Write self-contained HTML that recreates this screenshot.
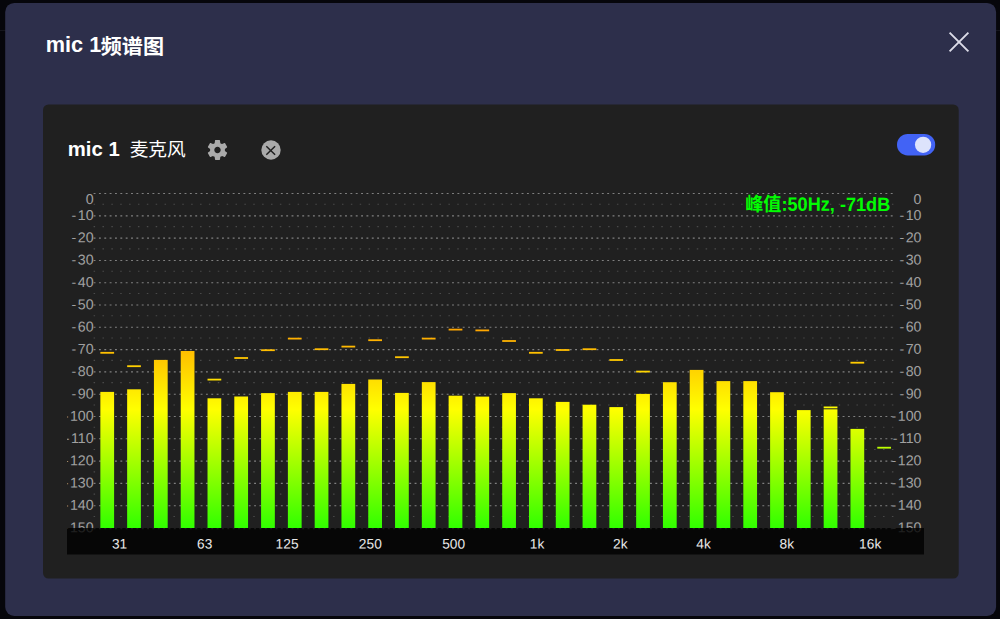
<!DOCTYPE html>
<html lang="zh-CN">
<head>
<meta charset="utf-8">
<title>mic 1频谱图</title>
<style>
html, body { margin: 0; padding: 0; }
body { width: 1000px; height: 619px; background: #06060b; overflow: hidden; position: relative;
  font-family: "Liberation Sans", "Noto Sans CJK SC", sans-serif; }
svg { position: absolute; left: 0; top: 0; display: block; }
.title { position: absolute; left: 45.8px; top: 32.4px; font-size: 21.7px; line-height: 26px; font-weight: bold; color: #fff; white-space: nowrap; }
.title span { font-size: 21.1px; margin-left: -0.5px; position: relative; top: 1.2px; display: inline-block; transform: scaleY(0.96); }
.ptitle { position: absolute; left: 67.8px; top: 136.3px; line-height: 26px; color: #fff; white-space: nowrap; font-size: 20.3px; font-weight: bold; }
.ptitle span { font-size: 18.7px; font-weight: normal; margin-left: 10px; position: relative; top: -0.4px; }
</style>
</head>
<body>
<svg class="bg" width="1000" height="619" viewBox="0 0 1000 619">
<rect x="0" y="30" width="1000" height="1" fill="#15151c"/>
<rect x="5.2" y="2.9" width="990.9" height="613.1" rx="9" fill="#2d2f4b"/>
<rect x="43" y="104.5" width="915.7" height="474" rx="5.5" fill="#202020"/>
<path d="M949.6 32.6 L968.4 51.4 M968.4 32.6 L949.6 51.4" stroke="#dcdce8" stroke-width="1.9" fill="none"/>
<g transform="translate(205.1 137.6) scale(1.0333)"><path fill="#aaaaaa" d="M19.14 12.94c.04-.3.06-.61.06-.94 0-.32-.02-.64-.07-.94l2.03-1.58a.49.49 0 0 0 .12-.61l-1.92-3.32a.488.488 0 0 0-.59-.22l-2.39.96c-.5-.38-1.03-.7-1.62-.94l-.36-2.54a.484.484 0 0 0-.48-.41h-3.84c-.24 0-.43.17-.47.41l-.36 2.54c-.59.24-1.13.57-1.62.94l-2.39-.96c-.22-.08-.47 0-.59.22L2.74 8.87c-.12.21-.08.47.12.61l2.03 1.58c-.05.3-.09.63-.09.94s.02.64.07.94l-2.03 1.58a.49.49 0 0 0-.12.61l1.92 3.32c.12.22.37.29.59.22l2.39-.96c.5.38 1.03.7 1.62.94l.36 2.54c.05.24.24.41.48.41h3.84c.24 0 .44-.17.47-.41l.36-2.54c.59-.24 1.13-.56 1.62-.94l2.39.96c.22.08.47 0 .59-.22l1.92-3.32c.12-.22.07-.47-.12-.61l-2.01-1.58zM12 15.1c-1.71 0-3.1-1.39-3.1-3.1s1.39-3.1 3.1-3.1 3.1 1.39 3.1 3.1-1.39 3.1-3.1 3.1z"/></g>
<circle cx="271" cy="150" r="9.7" fill="#aaaaaa"/>
<path d="M266.3 146.2 L275.1 154.8 M275.1 146.2 L266.3 154.8" stroke="#202020" stroke-width="1.5" fill="none"/>
<rect x="897" y="133.9" width="38.2" height="21.5" rx="10.75" fill="#4263f5"/>
<circle cx="923.1" cy="144.85" r="8.15" fill="#dde3fc"/>
</svg>
<div class="title">mic 1<span>频谱图</span></div>
<div class="ptitle">mic 1<span>麦克风</span></div>
<svg class="chart" width="1000" height="619" viewBox="0 0 1000 619">
<defs><linearGradient id="g" gradientUnits="userSpaceOnUse" x1="0" y1="181" x2="0" y2="556"><stop offset="0" stop-color="#ff0000"/><stop offset="0.609" stop-color="#ffff00"/><stop offset="1" stop-color="#00ff00"/></linearGradient></defs>
<g fill="none" stroke-width="1.1">
<line x1="93.6" x2="895" y1="193.55" y2="193.55" stroke="#808080" stroke-dasharray="1.9 3.45"/>
<line x1="93.6" x2="895" y1="215.85" y2="215.85" stroke="#808080" stroke-dasharray="1.9 3.45"/>
<line x1="93.6" x2="895" y1="238.14" y2="238.14" stroke="#808080" stroke-dasharray="1.9 3.45"/>
<line x1="93.6" x2="895" y1="260.44" y2="260.44" stroke="#808080" stroke-dasharray="1.9 3.45"/>
<line x1="93.6" x2="895" y1="282.73" y2="282.73" stroke="#808080" stroke-dasharray="1.9 3.45"/>
<line x1="93.6" x2="895" y1="305.03" y2="305.03" stroke="#808080" stroke-dasharray="1.9 3.45"/>
<line x1="93.6" x2="895" y1="327.32" y2="327.32" stroke="#808080" stroke-dasharray="1.9 3.45"/>
<line x1="93.6" x2="895" y1="349.62" y2="349.62" stroke="#808080" stroke-dasharray="1.9 3.45"/>
<line x1="93.6" x2="895" y1="371.91" y2="371.91" stroke="#808080" stroke-dasharray="1.9 3.45"/>
<line x1="93.6" x2="895" y1="394.21" y2="394.21" stroke="#808080" stroke-dasharray="1.9 3.45"/>
<line x1="93.6" x2="895" y1="416.50" y2="416.50" stroke="#808080" stroke-dasharray="1.9 3.45"/>
<line x1="93.6" x2="895" y1="438.80" y2="438.80" stroke="#808080" stroke-dasharray="1.9 3.45"/>
<line x1="93.6" x2="895" y1="461.09" y2="461.09" stroke="#808080" stroke-dasharray="1.9 3.45"/>
<line x1="93.6" x2="895" y1="483.39" y2="483.39" stroke="#808080" stroke-dasharray="1.9 3.45"/>
<line x1="93.6" x2="895" y1="505.68" y2="505.68" stroke="#808080" stroke-dasharray="1.9 3.45"/>
<line x1="93.6" x2="895" y1="528.58" y2="528.58" stroke="#808080" stroke-dasharray="1.9 3.45"/>
<line x1="93.6" x2="898" y1="204.30" y2="204.30" stroke="#4a4a4a" stroke-dasharray="1.5 7.37"/>
<line x1="93.6" x2="898" y1="226.59" y2="226.59" stroke="#4a4a4a" stroke-dasharray="1.5 7.37"/>
<line x1="93.6" x2="898" y1="248.89" y2="248.89" stroke="#4a4a4a" stroke-dasharray="1.5 7.37"/>
<line x1="93.6" x2="898" y1="271.18" y2="271.18" stroke="#4a4a4a" stroke-dasharray="1.5 7.37"/>
<line x1="93.6" x2="898" y1="293.48" y2="293.48" stroke="#4a4a4a" stroke-dasharray="1.5 7.37"/>
<line x1="93.6" x2="898" y1="315.77" y2="315.77" stroke="#4a4a4a" stroke-dasharray="1.5 7.37"/>
<line x1="93.6" x2="898" y1="338.07" y2="338.07" stroke="#4a4a4a" stroke-dasharray="1.5 7.37"/>
<line x1="93.6" x2="898" y1="360.36" y2="360.36" stroke="#4a4a4a" stroke-dasharray="1.5 7.37"/>
<line x1="93.6" x2="898" y1="382.66" y2="382.66" stroke="#4a4a4a" stroke-dasharray="1.5 7.37"/>
<line x1="93.6" x2="898" y1="404.95" y2="404.95" stroke="#4a4a4a" stroke-dasharray="1.5 7.37"/>
<line x1="93.6" x2="898" y1="427.25" y2="427.25" stroke="#4a4a4a" stroke-dasharray="1.5 7.37"/>
<line x1="93.6" x2="898" y1="449.54" y2="449.54" stroke="#4a4a4a" stroke-dasharray="1.5 7.37"/>
<line x1="93.6" x2="898" y1="471.84" y2="471.84" stroke="#4a4a4a" stroke-dasharray="1.5 7.37"/>
<line x1="93.6" x2="898" y1="494.13" y2="494.13" stroke="#4a4a4a" stroke-dasharray="1.5 7.37"/>
<line x1="93.6" x2="898" y1="516.43" y2="516.43" stroke="#4a4a4a" stroke-dasharray="1.5 7.37"/>
</g>
<clipPath id="c"><rect x="67" y="180" width="857" height="375"/></clipPath>
<g clip-path="url(#c)" font-family="'Liberation Sans', sans-serif" font-size="14.2" fill="#a0a0a0" text-anchor="end">
<text x="93.6" y="203.90" transform="rotate(0.03 93.6 203.90)">0</text>
<text x="921.5" y="203.90" transform="rotate(0.03 921.5 203.90)">0</text>
<text x="93.6" y="220.05" transform="rotate(0.03 93.6 220.05)">-<tspan dx="1.5">10</tspan></text>
<text x="921.5" y="220.05" transform="rotate(0.03 921.5 220.05)">-<tspan dx="1.5">10</tspan></text>
<text x="93.6" y="242.34" transform="rotate(0.03 93.6 242.34)">-<tspan dx="1.5">20</tspan></text>
<text x="921.5" y="242.34" transform="rotate(0.03 921.5 242.34)">-<tspan dx="1.5">20</tspan></text>
<text x="93.6" y="264.63" transform="rotate(0.03 93.6 264.63)">-<tspan dx="1.5">30</tspan></text>
<text x="921.5" y="264.63" transform="rotate(0.03 921.5 264.63)">-<tspan dx="1.5">30</tspan></text>
<text x="93.6" y="286.93" transform="rotate(0.03 93.6 286.93)">-<tspan dx="1.5">40</tspan></text>
<text x="921.5" y="286.93" transform="rotate(0.03 921.5 286.93)">-<tspan dx="1.5">40</tspan></text>
<text x="93.6" y="309.23" transform="rotate(0.03 93.6 309.23)">-<tspan dx="1.5">50</tspan></text>
<text x="921.5" y="309.23" transform="rotate(0.03 921.5 309.23)">-<tspan dx="1.5">50</tspan></text>
<text x="93.6" y="331.52" transform="rotate(0.03 93.6 331.52)">-<tspan dx="1.5">60</tspan></text>
<text x="921.5" y="331.52" transform="rotate(0.03 921.5 331.52)">-<tspan dx="1.5">60</tspan></text>
<text x="93.6" y="353.81" transform="rotate(0.03 93.6 353.81)">-<tspan dx="1.5">70</tspan></text>
<text x="921.5" y="353.81" transform="rotate(0.03 921.5 353.81)">-<tspan dx="1.5">70</tspan></text>
<text x="93.6" y="376.11" transform="rotate(0.03 93.6 376.11)">-<tspan dx="1.5">80</tspan></text>
<text x="921.5" y="376.11" transform="rotate(0.03 921.5 376.11)">-<tspan dx="1.5">80</tspan></text>
<text x="93.6" y="398.41" transform="rotate(0.03 93.6 398.41)">-<tspan dx="1.5">90</tspan></text>
<text x="921.5" y="398.41" transform="rotate(0.03 921.5 398.41)">-<tspan dx="1.5">90</tspan></text>
<text x="93.6" y="420.70" transform="rotate(0.03 93.6 420.70)">-<tspan dx="1.5">100</tspan></text>
<text x="921.5" y="420.70" transform="rotate(0.03 921.5 420.70)">-<tspan dx="1.5">100</tspan></text>
<text x="93.6" y="443.00" transform="rotate(0.03 93.6 443.00)">-<tspan dx="1.5">110</tspan></text>
<text x="921.5" y="443.00" transform="rotate(0.03 921.5 443.00)">-<tspan dx="1.5">110</tspan></text>
<text x="93.6" y="465.29" transform="rotate(0.03 93.6 465.29)">-<tspan dx="1.5">120</tspan></text>
<text x="921.5" y="465.29" transform="rotate(0.03 921.5 465.29)">-<tspan dx="1.5">120</tspan></text>
<text x="93.6" y="487.59" transform="rotate(0.03 93.6 487.59)">-<tspan dx="1.5">130</tspan></text>
<text x="921.5" y="487.59" transform="rotate(0.03 921.5 487.59)">-<tspan dx="1.5">130</tspan></text>
<text x="93.6" y="509.88" transform="rotate(0.03 93.6 509.88)">-<tspan dx="1.5">140</tspan></text>
<text x="921.5" y="509.88" transform="rotate(0.03 921.5 509.88)">-<tspan dx="1.5">140</tspan></text>
<text x="93.6" y="532.18" transform="rotate(0.03 93.6 532.18)">-<tspan dx="1.5">150</tspan></text>
<text x="921.5" y="532.18" transform="rotate(0.03 921.5 532.18)">-<tspan dx="1.5">150</tspan></text>
</g>
<g fill="url(#g)">
<rect x="100.35" y="391.90" width="13.75" height="136.10"/>
<rect x="100.35" y="351.90" width="13.75" height="1.8"/>
<rect x="127.14" y="389.30" width="13.75" height="138.70"/>
<rect x="127.14" y="365.30" width="13.75" height="1.8"/>
<rect x="153.93" y="359.90" width="13.75" height="168.10"/>
<rect x="180.72" y="351.00" width="13.75" height="177.00"/>
<rect x="207.51" y="398.30" width="13.75" height="129.70"/>
<rect x="207.51" y="378.70" width="13.75" height="1.8"/>
<rect x="234.30" y="396.50" width="13.75" height="131.50"/>
<rect x="234.30" y="357.10" width="13.75" height="1.8"/>
<rect x="261.09" y="393.10" width="13.75" height="134.90"/>
<rect x="261.09" y="349.30" width="13.75" height="1.8"/>
<rect x="287.88" y="391.90" width="13.75" height="136.10"/>
<rect x="287.88" y="337.70" width="13.75" height="1.8"/>
<rect x="314.67" y="391.90" width="13.75" height="136.10"/>
<rect x="314.67" y="348.30" width="13.75" height="1.8"/>
<rect x="341.46" y="383.90" width="13.75" height="144.10"/>
<rect x="341.46" y="345.70" width="13.75" height="1.8"/>
<rect x="368.25" y="379.50" width="13.75" height="148.50"/>
<rect x="368.25" y="339.30" width="13.75" height="1.8"/>
<rect x="395.04" y="392.90" width="13.75" height="135.10"/>
<rect x="395.04" y="356.30" width="13.75" height="1.8"/>
<rect x="421.83" y="382.10" width="13.75" height="145.90"/>
<rect x="421.83" y="337.70" width="13.75" height="1.8"/>
<rect x="448.62" y="395.70" width="13.75" height="132.30"/>
<rect x="448.62" y="328.70" width="13.75" height="1.8"/>
<rect x="475.41" y="396.60" width="13.75" height="131.40"/>
<rect x="475.41" y="329.50" width="13.75" height="1.8"/>
<rect x="502.20" y="393.10" width="13.75" height="134.90"/>
<rect x="502.20" y="340.10" width="13.75" height="1.8"/>
<rect x="528.99" y="398.30" width="13.75" height="129.70"/>
<rect x="528.99" y="351.90" width="13.75" height="1.8"/>
<rect x="555.78" y="401.90" width="13.75" height="126.10"/>
<rect x="555.78" y="349.10" width="13.75" height="1.8"/>
<rect x="582.57" y="404.70" width="13.75" height="123.30"/>
<rect x="582.57" y="348.30" width="13.75" height="1.8"/>
<rect x="609.36" y="407.10" width="13.75" height="120.90"/>
<rect x="609.36" y="359.10" width="13.75" height="1.8"/>
<rect x="636.15" y="393.90" width="13.75" height="134.10"/>
<rect x="636.15" y="370.70" width="13.75" height="1.8"/>
<rect x="662.94" y="382.20" width="13.75" height="145.80"/>
<rect x="689.73" y="369.90" width="13.75" height="158.10"/>
<rect x="716.52" y="381.10" width="13.75" height="146.90"/>
<rect x="743.31" y="381.10" width="13.75" height="146.90"/>
<rect x="770.10" y="392.20" width="13.75" height="135.80"/>
<rect x="796.89" y="410.10" width="13.75" height="117.90"/>
<rect x="823.68" y="409.30" width="13.75" height="118.70"/>
<rect x="823.68" y="406.50" width="13.75" height="1.8"/>
<rect x="850.47" y="428.90" width="13.75" height="99.10"/>
<rect x="850.47" y="361.80" width="13.75" height="1.8"/>
<rect x="877.26" y="446.80" width="13.75" height="1.8"/>
</g>
<rect x="67" y="528" width="857" height="26.5" fill="#000" fill-opacity="0.8"/>
<g font-family="'Liberation Sans', sans-serif" font-size="13.7" letter-spacing="0.1" fill="#e8e8e8" text-anchor="middle">
<text x="119.6" y="548.6" transform="rotate(0.03 119.6 548.6)">31</text>
<text x="204.8" y="548.6" transform="rotate(0.03 204.8 548.6)">63</text>
<text x="287.1" y="548.6" transform="rotate(0.03 287.1 548.6)">125</text>
<text x="370.4" y="548.6" transform="rotate(0.03 370.4 548.6)">250</text>
<text x="453.7" y="548.6" transform="rotate(0.03 453.7 548.6)">500</text>
<text x="537.0" y="548.6" transform="rotate(0.03 537.0 548.6)">1k</text>
<text x="620.3" y="548.6" transform="rotate(0.03 620.3 548.6)">2k</text>
<text x="703.6" y="548.6" transform="rotate(0.03 703.6 548.6)">4k</text>
<text x="786.9" y="548.6" transform="rotate(0.03 786.9 548.6)">8k</text>
<text x="870.2" y="548.6" transform="rotate(0.03 870.2 548.6)">16k</text>
</g>
<text x="890.3" y="0" transform="translate(0 210.9) rotate(0.03 890.3 0) scale(1 1.06)" text-anchor="end" font-family="'Liberation Sans', 'Noto Sans CJK SC', sans-serif" font-weight="bold" font-size="18.15" fill="#02fd02">峰值:50Hz, -71dB</text>
</svg>
</body>
</html>
